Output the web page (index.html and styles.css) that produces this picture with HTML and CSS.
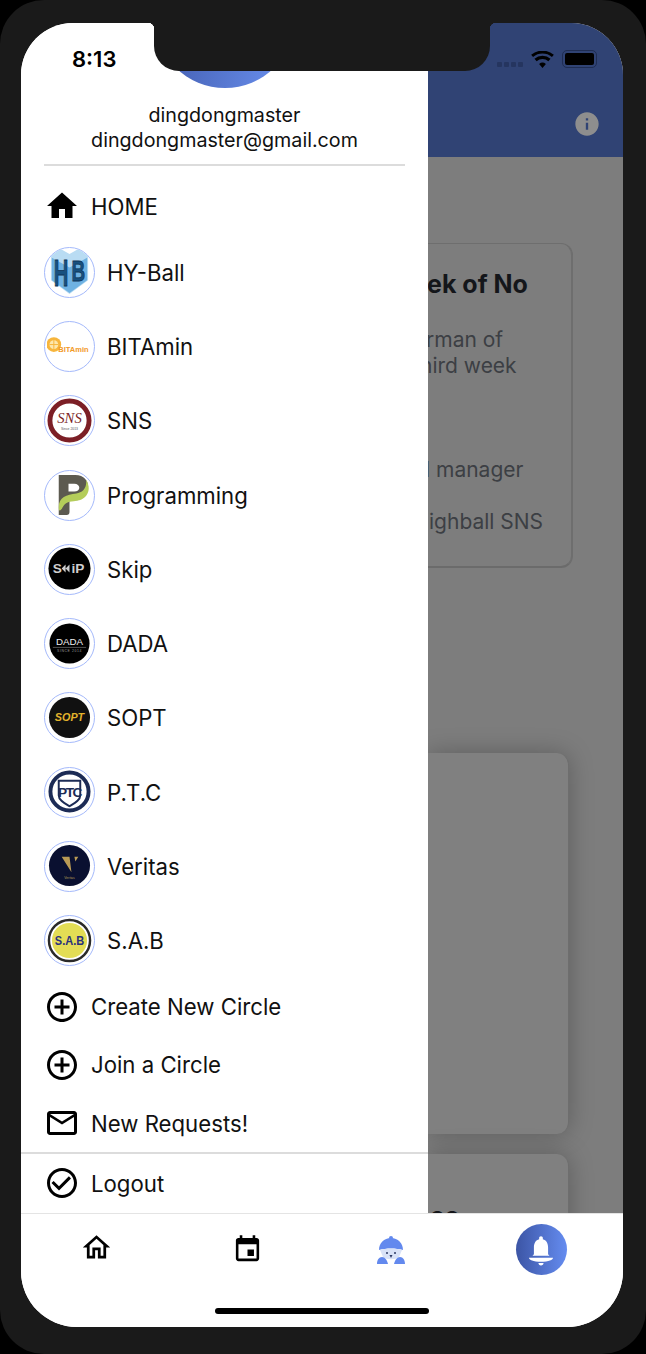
FILE: index.html
```html
<!DOCTYPE html>
<html lang="en">
<head>
  <meta charset="UTF-8">
  <meta name="viewport" content="width=device-width, initial-scale=1.0">
  <title>Circle drawer</title>
  <link rel="stylesheet" href="styles.css">
</head>
<body>
  <div class="phone">
    <div class="screen">
      <div class="content">

        <!-- Side drawer -->
        <nav class="drawer">
          <div class="profile">
            <div class="avatar-big"></div>
            <p class="profile-name">dingdongmaster</p>
            <p class="profile-mail">dingdongmaster@gmail.com</p>
          </div>

          <a class="row">
            <svg class="icon" viewBox="0 0 24 24"><path d="M10 20v-6h4v6h5v-8h3L12 3 2 12h3v8z"/></svg>
            <span>HOME</span>
          </a>

          <a class="club">
            <span class="logo">
              <svg viewBox="0 0 46 46">
                <path class="hb-top" d="M4 6l10-6 9 5 9-5 10 6v26L23 46 4 32z"/>
                <path class="hb-wing" d="M5 9l18 10 18-10v23L23 45 5 32z"/>
                <text class="hb-text" x="14.500" y="38" textLength="15" lengthAdjust="spacingAndGlyphs">H</text>
                <text class="hb-text hb-b" x="32" y="33" textLength="14" lengthAdjust="spacingAndGlyphs">B</text>
              </svg>
            </span>
            <span>HY-Ball</span>
          </a>

          <a class="club">
            <span class="logo">
              <svg viewBox="0 0 46 46">
                <circle class="bit-fruit" cx="7" cy="21" r="7.500"/>
                <circle class="bit-core" cx="7" cy="21" r="4.500"/>
                <path class="bit-seg" d="M7 16.500v9M2.500 21h9"/>
                <text class="bit-text" x="11.500" y="29" textLength="31" lengthAdjust="spacingAndGlyphs">BITAmin</text>
              </svg>
            </span>
            <span>BITAmin</span>
          </a>

          <a class="club">
            <span class="logo">
              <svg viewBox="0 0 46 46">
                <circle class="sns-ring" cx="23" cy="23" r="20"/>
                <text class="sns-text" x="23" y="26">SNS</text>
                <text class="sns-small" x="23" y="33">Since 2013</text>
              </svg>
            </span>
            <span>SNS</span>
          </a>

          <a class="club">
            <span class="logo">
              <svg viewBox="0 0 46 46">
                <path class="p-stem" d="M12 3h17c9 0 13 6 13 12 0 8-6 14-14 14h-5v12c0 2-1 3-3 3h-8z"/>
                <path class="p-hole" d="M22 12h6c3 0 5 2 5 4s-2 4-5 4h-6z"/>
                <path class="p-leaf" d="M12 36c0-10 8-13 18-14 6-1 11-5 10-14 5 8 3 18-7 21-8 2-13 0-17 7-2 4-4 5-4 0z"/>
              </svg>
            </span>
            <span>Programming</span>
          </a>

          <a class="club">
            <span class="logo">
              <svg viewBox="0 0 46 46">
                <circle class="disc" cx="23" cy="23" r="21.500"/>
                <text class="skip-text" x="6" y="28">S</text>
                <path class="skip-arrows" d="M15 23l4-4v8zM19 23l4-4v8z"/>
                <text class="skip-text" x="25" y="28">iP</text>
              </svg>
            </span>
            <span>Skip</span>
          </a>

          <a class="club">
            <span class="logo">
              <svg viewBox="0 0 46 46">
                <circle class="disc" cx="23" cy="23" r="20.500"/>
                <text class="dada-text" x="23" y="25">DADA</text>
                <path class="dada-line" d="M6 27h34"/>
                <text class="dada-small" x="23" y="32">SINCE 2014</text>
              </svg>
            </span>
            <span>DADA</span>
          </a>

          <a class="club">
            <span class="logo">
              <svg viewBox="0 0 46 46">
                <circle class="disc sopt-disc" cx="23" cy="23" r="21"/>
                <text class="sopt-text" x="23" y="27" textLength="30" lengthAdjust="spacingAndGlyphs">SOPT</text>
              </svg>
            </span>
            <span>SOPT</span>
          </a>

          <a class="club">
            <span class="logo">
              <svg viewBox="0 0 46 46">
                <circle class="ptc-ring" cx="23" cy="23" r="19.500"/>
                <path class="ptc-shield" d="M12 12h22v15c0 5-6 8-11 11-5-3-11-6-11-11z"/>
                <text class="ptc-text" x="23" y="29">PTC</text>
              </svg>
            </span>
            <span>P.T.C</span>
          </a>

          <a class="club">
            <span class="logo">
              <svg viewBox="0 0 46 46">
                <circle class="disc ver-disc" cx="23" cy="23" r="21"/>
                <path class="ver-mark" d="M15 14h8l2 16zM28 14h4l-3 5z"/>
                <text class="ver-text" x="23" y="37">Veritas</text>
              </svg>
            </span>
            <span>Veritas</span>
          </a>

          <a class="club">
            <span class="logo">
              <svg viewBox="0 0 46 46">
                <circle class="sab-ring" cx="23" cy="23" r="21"/>
                <circle class="sab-disc" cx="23" cy="23" r="18"/>
                <text class="sab-text" x="23" y="27.500" textLength="30" lengthAdjust="spacingAndGlyphs">S.A.B</text>
              </svg>
            </span>
            <span>S.A.B</span>
          </a>

          <a class="row">
            <svg class="icon" viewBox="0 0 24 24"><path d="M13 7h-2v4H7v2h4v4h2v-4h4v-2h-4V7zm-1-5C6.480 2 2 6.480 2 12s4.480 10 10 10 10-4.480 10-10S17.520 2 12 2zm0 18c-4.410 0-8-3.590-8-8s3.590-8 8-8 8 3.590 8 8-3.590 8-8 8z"/></svg>
            <span>Create New Circle</span>
          </a>
          <a class="row">
            <svg class="icon" viewBox="0 0 24 24"><path d="M13 7h-2v4H7v2h4v4h2v-4h4v-2h-4V7zm-1-5C6.480 2 2 6.480 2 12s4.480 10 10 10 10-4.480 10-10S17.520 2 12 2zm0 18c-4.410 0-8-3.590-8-8s3.590-8 8-8 8 3.590 8 8-3.590 8-8 8z"/></svg>
            <span>Join a Circle</span>
          </a>
          <a class="row">
            <svg class="icon" viewBox="0 0 24 24"><path d="M20 4H4c-1.100 0-1.990.9-1.990 2L2 18c0 1.100.9 2 2 2h16c1.100 0 2-.9 2-2V6c0-1.100-.9-2-2-2zm0 14H4V8l8 5 8-5v10zm-8-7L4 6h16l-8 5z"/></svg>
            <span>New Requests!</span>
          </a>
          <a class="row row-logout">
            <svg class="icon" viewBox="0 0 24 24"><path d="M16.590 7.580L10 14.170l-3.590-3.580L5 12l5 5 8-8zM12 2C6.480 2 2 6.480 2 12s4.480 10 10 10 10-4.480 10-10S17.520 2 12 2zm0 18c-4.420 0-8-3.580-8-8s3.580-8 8-8 8 3.580 8 8-3.580 8-8 8z"/></svg>
            <span>Logout</span>
          </a>
        </nav>

        <!-- Dimmed page behind the drawer -->
        <div class="backdrop">
          <header class="app-header">
            <svg class="info" viewBox="0 0 24 24"><path d="M12 2C6.480 2 2 6.480 2 12s4.480 10 10 10 10-4.480 10-10S17.520 2 12 2zm1 15h-2v-6h2v6zm0-8h-2V7h2v2z"/></svg>
          </header>
          <div class="feed">
            <section class="card card-notice">
              <h3>ek of No</h3>
              <p class="line-rman">rman of</p>
              <p class="line-hird">hird week</p>
              <p class="line-manager">l manager</p>
              <p class="line-sns">ighball SNS</p>
            </section>
            <section class="card card-empty"></section>
            <section class="card card-peek">oo</section>
          </div>
        </div>
      </div>

      <!-- Bottom tabs -->
      <footer class="tabs">
        <div class="tab">
          <svg class="tab-home" viewBox="0 0 24 24"><path d="M12 5.690l5 4.500V18h-2v-6H9v6H7v-7.810l5-4.500M12 3L2 12h3v8h6v-6h2v6h6v-8h3L12 3z"/></svg>
        </div>
        <div class="tab">
          <svg class="tab-event" viewBox="0 0 24 24"><path d="M17 12h-5v5h5v-5zM16 1v2H8V1H6v2H5c-1.110 0-1.990.9-1.990 2L3 19c0 1.100.89 2 2 2h14c1.100 0 2-.9 2-2V5c0-1.100-.9-2-2-2h-1V1h-2zm3 18H5V8h14v11z"/></svg>
        </div>
        <div class="tab">
          <svg class="koala" viewBox="0 0 30 30">
            <circle class="k-blue" cx="15" cy="3" r="2"/>
            <path class="k-blue" d="M3 15C3 8 8 3 15 3s12 5 12 12c-7-2-17-2-24 0z"/>
            <path class="k-face" d="M4 15c6-2 16-2 22 0l-3 7c-3 3-13 3-16 0z"/>
            <circle class="k-dark" cx="11" cy="18" r="1"/>
            <circle class="k-dark" cx="19" cy="18" r="1"/>
            <path class="k-dark" d="M13.500 20h3l-1.500 3z"/>
            <path class="k-blue" d="M1 29c0-4 2-7 5-7s5 3 6 7zM18 29c1-4 3-7 6-7s5 3 5 7z"/>
          </svg>
        </div>
        <div class="tab">
          <span class="bell">
            <svg viewBox="0 0 24 24"><path d="M12 23c1 0 1.800-.7 1.800-1.800h-3.600c0 1.100.8 1.800 1.800 1.800zM17 15V10c0-2.800-1.300-5-3.700-5.600V3.600c0-.8-.5-1.300-1.300-1.300s-1.300.5-1.300 1.300v.8C8.300 5 7 7.200 7 10v5l-1 1h12zM3.500 17.500c0 1.500 3 2.800 8.500 2.800s8.500-1.300 8.500-2.800z"/></svg>
          </span>
        </div>
        <div class="home-bar"></div>
      </footer>

      <!-- Phone chrome drawn over the app -->
      <div class="notch"></div>
      <div class="time">8:13</div>
      <div class="status">
        <span class="signal"><i></i><i></i><i></i><i></i></span>
        <svg class="wifi" viewBox="0 0 24 18"><path d="M12 18l-3.600-4.200a5.500 5.500 0 0 1 7.200 0zM5.800 10.800l-2.300-2.600a13 13 0 0 1 17 0l-2.300 2.600a9.500 9.500 0 0 0-12.400 0zM2 6.400L0 4a18.500 18.500 0 0 1 24 0l-2 2.400a15.500 15.500 0 0 0-20 0z"/></svg>
        <span class="battery"><b></b></span>
      </div>
    </div>
  </div>
</body>
</html>
```

FILE: styles.css
```css
* {
  box-sizing: border-box;
}

html, body {
  margin: 0;
  height: 1354px;
  background: #000;
  overflow: hidden;
}

body {
  font-family: Inter, "Liberation Sans", sans-serif;
  color: #111;
}

p, h3 {
  margin: 0;
}

.phone {
  width: 646px;
  height: 1354px;
  padding: 23px 23px 27px 21px;
  background: #1a1a1a;
  border-radius: 44px;
}

.screen {
  position: relative;
  height: 1304px;
  display: flex;
  flex-direction: column;
  background: #fff;
  border-radius: 52px 52px 56px 56px;
  overflow: hidden;
}

.content {
  display: flex;
  height: 1190px;
}

/* Drawer */
.drawer {
  width: 407px;
  flex-shrink: 0;
  background: #fff;
  overflow: hidden;
}

.profile {
  display: flow-root;
  height: 143px;
  margin: 0 23px 11px;
  border-bottom: 2px solid #dcdcdc;
  text-align: center;
  font-size: 19.7px;
  line-height: 25px;
}

.avatar-big {
  width: 140px;
  height: 140px;
  margin: -75px auto 15px;
  border-radius: 50%;
  background: linear-gradient(100deg, #3c55a5, #6c93f2);
}

.row {
  height: 58.2px;
  display: flex;
  align-items: center;
  gap: 11px;
  padding-left: 23px;
  font-size: 22.2px;
}

.row-logout {
  height: 60px;
  border-top: 2px solid #dcdcdc;
}

.row svg {
  width: 36px;
  height: 36px;
  flex-shrink: 0;
  fill: #000;
}

.club {
  height: 74.25px;
  display: flex;
  align-items: center;
  gap: 12px;
  padding-left: 23px;
  font-size: 22.2px;
}

.logo {
  width: 51px;
  height: 51px;
  flex-shrink: 0;
  padding: 1.5px;
  border: 1.5px solid #a4b9fb;
  border-radius: 50%;
  background: #fff;
  overflow: hidden;
}

.logo svg {
  display: block;
  width: 45px;
  height: 45px;
}

.logo text {
  text-anchor: middle;
  font-family: "Liberation Sans", sans-serif;
}

.disc {
  fill: #000;
}

/* club logos */
.hb-wing { fill: #6fb2e2; }
.hb-top { fill: #b9dcf3; }
.logo .hb-text {
  font-size: 38px;
  font-weight: 700;
  fill: #17507f;
  stroke: #0f3557;
  stroke-width: .8px;
}
.logo .hb-b {
  font-size: 30px;
}

.bit-fruit { fill: #f7b53c; }
.bit-core { fill: #fde7ad; }
.bit-seg { stroke: #f7b53c; stroke-width: 1px; fill: none; }
.logo .bit-text {
  text-anchor: start;
  font-size: 8px;
  font-weight: 700;
  fill: #f29a28;
}

.sns-ring { fill: #fff; stroke: #7c1f26; stroke-width: 5px; }
.logo .sns-text {
  font-family: "Liberation Serif", serif;
  font-style: italic;
  font-size: 15px;
  fill: #7c1f26;
}
.logo .sns-small { font-size: 3.500px; fill: #555; }

.p-stem { fill: #5c5a50; }
.p-hole { fill: #fff; }
.p-leaf { fill: #b4cd5a; }

.logo .skip-text {
  text-anchor: start;
  font-size: 14px;
  font-weight: 700;
  fill: #cfcfcf;
}
.skip-arrows { fill: #cfcfcf; }

.logo .dada-text { font-size: 10px; fill: #eee; }
.dada-line { stroke: #777; stroke-width: .7px; }
.logo .dada-small { font-size: 3.500px; fill: #999; letter-spacing: .6px; }

.sopt-disc { fill: #111; }
.logo .sopt-text {
  font-size: 11.500px;
  font-weight: 700;
  font-style: italic;
  fill: #e3b32c;
}

.ptc-ring { fill: #fff; stroke: #1c2b55; stroke-width: 4px; }
.ptc-shield { fill: #fff; stroke: #1c2b55; stroke-width: 2px; }
.logo .ptc-text { font-size: 14px; font-weight: 700; fill: #1c2b55; letter-spacing: -1.500px; }

.ver-disc { fill: #0a1030; }
.ver-mark { fill: #b99a55; }
.logo .ver-text { font-size: 3.500px; fill: #b99a55; }

.sab-ring { fill: #fff; stroke: #2a2a2a; stroke-width: 2.500px; }
.sab-disc { fill: #e3dd55; }
.logo .sab-text { font-size: 12.500px; font-weight: 700; fill: #28307e; }

/* Page behind the drawer */
.backdrop {
  flex: 1;
  min-width: 0;
  background: #7d7d7d;
  overflow: hidden;
}

.app-header {
  height: 134px;
  display: flex;
  justify-content: flex-end;
  align-items: flex-end;
  padding: 0 22px 19px 0;
  background: #304374;
}

.info {
  width: 28px;
  height: 28px;
  fill: #8e8e8e;
}

.feed {
  padding-top: 86px;
}

.card {
  border-radius: 0 12px 12px 0;
  border-right: 1px solid #6e6e6e;
  background: #7d7d7d;
}

.card-notice {
  height: 325px;
  margin-right: 50px;
  padding-top: 25px;
  border-top: 1px solid #6e6e6e;
  border-bottom: 2px solid #6b6b6b;
  border-right: 2px solid #6e6e6e;
  font-size: 21px;
  line-height: 26px;
  color: #3c3f44;
  white-space: nowrap;
}

.card-notice h3 {
  margin-left: -1px;
  font-size: 25px;
  line-height: 30px;
  font-weight: 700;
  color: #14161a;
}

.line-rman {
  margin: 28px 0 0 -2px;
}

.line-hird {
  margin-left: -8px;
}

.line-manager {
  margin: 78px 0 0 -3px;
}

.line-sns {
  margin: 26px 0 0 1px;
}

.card-empty {
  height: 381px;
  margin: 185px 54px 0 0;
  background: #808080;
  box-shadow: 0 0 24px rgba(0, 0, 0, .25);
}

.card-peek {
  height: 120px;
  margin: 20px 54px 0 0;
  padding: 47px 0 0 2px;
  background: #808080;
  box-shadow: 0 0 24px rgba(0, 0, 0, .25);
  font-size: 24px;
  font-weight: 700;
  color: #14161a;
  border-radius: 0 12px 0 0;
}

/* Tabs */
.tabs {
  position: relative;
  height: 114px;
  display: grid;
  grid-template-columns: 151px 151px 136px 164px;
  align-items: start;
  background: #fff;
  border-top: 1px solid #e4e4e4;
}

.tab {
  display: flex;
  justify-content: center;
  padding-top: 10px;
}

.tab-home {
  width: 33px;
  height: 33px;
  margin-top: 7px;
  fill: #000;
}

.tab-event {
  width: 31px;
  height: 31px;
  margin-top: 10px;
  fill: #000;
}

.koala {
  width: 30px;
  height: 30px;
  margin-top: 11px;
}

.k-blue { fill: #6389ee; }
.k-face { fill: #d9e2f7; }
.k-dark { fill: #2c3a66; }

.bell {
  width: 51px;
  height: 51px;
  display: flex;
  align-items: center;
  justify-content: center;
  border-radius: 50%;
  background: linear-gradient(90deg, #3c55a5, #658cf0);
}

.bell svg {
  width: 34px;
  height: 34px;
  fill: #fff;
}

.home-bar {
  position: absolute;
  left: 194px;
  bottom: 13px;
  width: 214px;
  height: 6px;
  border-radius: 3px;
  background: #000;
}

/* Status bar */
.notch {
  position: absolute;
  top: 0;
  left: 133px;
  width: 336px;
  height: 48px;
  background: #1a1a1a;
  border-radius: 0 0 25px 25px;
}

.notch::before,
.notch::after {
  content: "";
  position: absolute;
  top: 0;
  width: 6px;
  height: 6px;
}

.notch::before {
  left: -6px;
  background: radial-gradient(circle at 0 100%, transparent 6px, #1a1a1a 6.500px);
}

.notch::after {
  right: -6px;
  background: radial-gradient(circle at 100% 100%, transparent 6px, #1a1a1a 6.500px);
}

.time {
  position: absolute;
  top: 22px;
  left: 51px;
  font-size: 22px;
  line-height: 28px;
  font-weight: 600;
  color: #000;
}

.status {
  position: absolute;
  top: 27px;
  right: 26px;
  display: flex;
  align-items: center;
  gap: 8px;
  height: 18px;
}

.signal {
  display: flex;
  gap: 2px;
  margin-top: 10px;
}

.signal i {
  width: 5px;
  height: 5px;
  border-radius: 1px;
  background: #25355f;
}

.wifi {
  width: 23px;
  height: 17px;
  fill: #000;
}

.battery {
  width: 35px;
  height: 18px;
  padding: 2px;
  border: 1.5px solid #1f2d52;
  border-radius: 5px;
}

.battery b {
  display: block;
  height: 100%;
  border-radius: 2px;
  background: #000;
}
```
